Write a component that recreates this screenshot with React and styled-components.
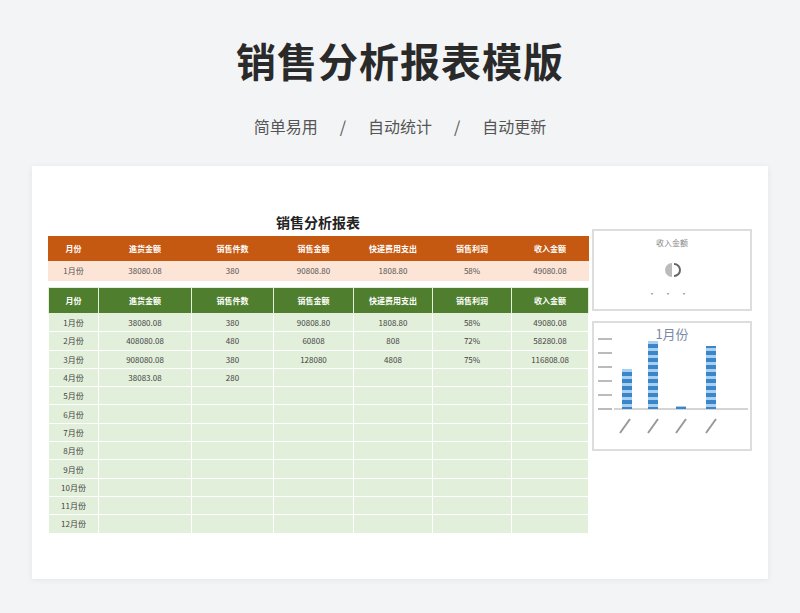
import React from 'react';
import styled, { createGlobalStyle } from 'styled-components';

const Global = createGlobalStyle`
  body { margin: 0; background: #f3f4f6; font-family: "Noto Sans CJK SC", "Noto Sans", sans-serif; }
`;

const Page = styled.div`
  width: 800px;
  height: 613px;
  display: flex;
  flex-direction: column;
  align-items: center;
`;
const Title = styled.h1`
  margin: 32px 0 0;
  font-size: 40px;
  line-height: 56px;
  font-weight: 700;
  color: #2a2a2a;
  letter-spacing: 1px;
`;
const Sub = styled.div`
  margin-top: 26px;
  font-size: 16px;
  color: #555;
  display: flex;
  gap: 22px;
`;
const Card = styled.div`
  margin-top: 28px;
  width: 736px;
  height: 413px;
  background: #fff;
  box-shadow: 0 1px 6px #0001;
  display: flex;
  padding: 44px 0 0 16px;
  box-sizing: border-box;
  gap: 4px;
`;
const Sheet = styled.div`
  width: 540px;
  font-family: "Noto Sans CJK SC", serif;
`;
const SheetTitle = styled.div`
  text-align: center;
  font-size: 14px;
  font-weight: 700;
  color: #222;
  height: 26px;
  line-height: 24px;
`;
const Table = styled.table`
  width: 100%;
  border-collapse: collapse;
  table-layout: fixed;
  margin-bottom: ${p => p.$mb || 0}px;
  td {
    font-size: 8px;
    text-align: center;
    color: ${p => p.$text || '#444'};
    padding: 0;
    border: 1px solid #fff;
    white-space: nowrap;
    overflow: hidden;
  }
`;
const Head = styled.tr`
  background: ${p => p.$bg};
  height: ${p => p.$h}px;
  td { color: #fff; font-weight: 700; border-color: ${p => p.$line}; }
`;
const Row = styled.tr`
  background: ${p => p.$bg};
  height: ${p => p.$h}px;
`;
const Charts = styled.div`
  display: flex;
  flex-direction: column;
  gap: 10px;
  margin-top: 19px;
`;
const ChartBox = styled.div`
  width: 160px;
  height: ${p => p.$h}px;
  border: 2px solid #ddd;
  box-sizing: border-box;
  position: relative;
  font-size: 8px;
  color: #888;
  text-align: center;
`;

const cols = ['月份', '進货金额', '销售件数', '销售金额', '快递费用支出', '销售利润', '收入金额'];
const widths = [50, 93, 82, 80, 79, 79, 77];
const data = [
  ['1月份', '38080.08', '380', '90808.80', '1808.80', '58%', '49080.08'],
  ['2月份', '408080.08', '480', '60808', '808', '72%', '58280.08'],
  ['3月份', '908080.08', '380', '128080', '4808', '75%', '116808.08'],
  ['4月份', '38083.08', '280', '', '', '', ''],
];
for (let i = 5; i <= 12; i++) data.push([`${i}月份`, '', '', '', '', '', '']);

const Cols = () => (
  <colgroup>{widths.map((w, i) => <col key={i} style={{ width: w }} />)}</colgroup>
);

export default function App() {
  return (
    <Page>
      <Global />
      <Title>销售分析报表模版</Title>
      <Sub><span>简单易用</span><span>/</span><span>自动统计</span><span>/</span><span>自动更新</span></Sub>
      <Card>
        <Sheet>
          <SheetTitle>销售分析报表</SheetTitle>
          <Table $mb={6} $text="#555">
            <Cols />
            <tbody>
              <Head $bg="#c65911" $h={24} $line="#c65911">{cols.map(c => <td key={c}>{c}</td>)}</Head>
              <Row $bg="#fce4d6" $h={20}>{data[0].map((c, i) => <td key={i} style={{ borderColor: '#fce4d6' }}>{c}</td>)}</Row>
            </tbody>
          </Table>
          <Table>
            <Cols />
            <tbody>
              <Head $bg="#4f7f2e" $h={26} $line="#e2efda">{cols.map(c => <td key={c}>{c}</td>)}</Head>
              {data.map((r, j) => (
                <Row key={j} $bg="#e2efda" $h={18.3}>{r.map((c, i) => <td key={i}>{c}</td>)}</Row>
              ))}
            </tbody>
          </Table>
        </Sheet>
        <Charts>
          <ChartBox $h={82}>
            <div style={{ marginTop: 6 }}>收入金额</div>
            <svg width="20" height="20" viewBox="0 0 20 20" style={{ marginTop: 12 }}>
              <path d="M10 3 A7 7 0 1 0 10 17 Z" fill="#bbb" />
              <path d="M12 4 A6 6 0 0 1 12 16" fill="none" stroke="#666" strokeWidth="2" />
            </svg>
            <div style={{ marginTop: 6, letterSpacing: 8 }}>···</div>
          </ChartBox>
          <ChartBox $h={130}>
            <svg width="156" height="126" viewBox="0 0 156 126">
              <text x="78" y="16" fontSize="13" fill="#7a8aa8" textAnchor="middle">1月份</text>
              {[0, 1, 2, 3, 4, 5].map(i => (
                <g key={i}>
                  <line x1="4" x2="18" y1={86 - i * 14} y2={86 - i * 14} stroke="#bbb" strokeWidth="2" />
                </g>
              ))}
              <line x1="20" x2="154" y1="86" y2="86" stroke="#aaa" />
              {[[26, 40], [52, 68], [80, 3], [110, 63]].map(([x, h], i) => (
                <rect key={i} x={x + 2} y={86 - h} width="10" height={h} fill="url(#st)" />
              ))}
              <defs>
                <pattern id="st" width="10" height="7" patternUnits="userSpaceOnUse">
                  <rect width="10" height="7" fill="#3a86c8" />
                  <rect y="4" width="10" height="3" fill="#a9d0f0" />
                </pattern>
              </defs>
              {[34, 62, 90, 120].map((x, i) => (
                <line key={i} x1={x - 8} y1="110" x2={x + 2} y2="96" stroke="#999" strokeWidth="2" />
              ))}
            </svg>
          </ChartBox>
        </Charts>
      </Card>
    </Page>
  );
}
